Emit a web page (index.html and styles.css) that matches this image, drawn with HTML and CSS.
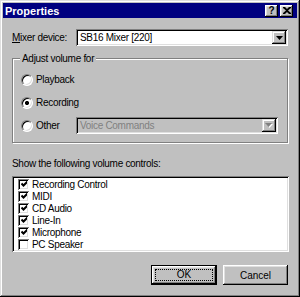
FILE: index.html
```html
<!DOCTYPE html>
<html lang="en">
<head>
  <meta charset="UTF-8">
  <title>Properties</title>
  <link rel="stylesheet" href="styles.css">
</head>
<body>
  <div class="window">
    <div class="titlebar">
      <span class="title">Properties</span>
      <div class="title-buttons">
        <span class="tbtn help">?</span>
        <span class="tbtn close">
          <svg width="8" height="7" viewBox="0 0 8 7"><path d="M0 0h2l2 2 2-2h2v1L5 3.5 8 6v1H6L4 5 2 7H0V6l3-2.5L0 1z" fill="#000"/></svg>
        </span>
      </div>
    </div>

    <div class="content">
      <div class="field-row">
        <label class="field-label"><u>M</u>ixer device:</label>
        <div class="combo">
          <span class="combo-text">SB16 Mixer [220]</span>
          <span class="drop"><svg width="7" height="4" viewBox="0 0 7 4"><path d="M0 0h7L3.5 4z" fill="#000"/></svg></span>
        </div>
      </div>

      <fieldset class="group">
        <legend>Adjust volume for</legend>
        <div class="radio-row">
          <span class="radio"></span>
          <span>Playback</span>
        </div>
        <div class="radio-row">
          <span class="radio checked"></span>
          <span>Recording</span>
        </div>
        <div class="radio-row">
          <span class="radio"></span>
          <span class="radio-label">Other</span>
          <div class="combo disabled">
            <span class="combo-text">Voice Commands</span>
            <span class="drop"><svg width="8" height="5" viewBox="0 0 8 5"><path d="M1 1h7L4.5 5z" fill="#fff"/><path d="M0 0h7L3.5 4z" fill="#808080"/></svg></span>
          </div>
        </div>
      </fieldset>

      <p class="list-label">Show the following volume controls:</p>
      <div class="listbox">
        <div class="item"><span class="check on"></span>Recording Control</div>
        <div class="item"><span class="check on"></span>MIDI</div>
        <div class="item"><span class="check on"></span>CD Audio</div>
        <div class="item"><span class="check on"></span>Line-In</div>
        <div class="item"><span class="check on"></span>Microphone</div>
        <div class="item"><span class="check"></span>PC Speaker</div>
      </div>

      <div class="buttons">
        <button class="btn default"><span class="focus">OK</span></button>
        <button class="btn">Cancel</button>
      </div>
    </div>
  </div>
</body>
</html>
```

FILE: styles.css
```css
html, body {
  margin: 0;
  width: 300px;
  height: 297px;
  overflow: hidden;
  background: #c0c0c0;
}

body {
  font-family: "Liberation Sans", Arial, sans-serif;
  font-size: 10px;
  letter-spacing: -0.3px;
  color: #000;
  white-space: nowrap;
}

.window {
  box-sizing: border-box;
  width: 300px;
  height: 297px;
  padding: 3px;
  background: #c0c0c0;
  box-shadow: inset -1px -1px #000, inset 1px 1px #dfdfdf,
              inset -2px -2px #808080, inset 2px 2px #fff;
}

/* title bar */
.titlebar {
  height: 15px;
  background: #000080;
  color: #fff;
  display: flex;
  align-items: center;
  justify-content: space-between;
  padding: 0 4px 0 2px;
}

.title {
  font-weight: bold;
  font-size: 11px;
  letter-spacing: 0;
}

.title-buttons {
  display: flex;
  gap: 2px;
}

.tbtn {
  box-sizing: border-box;
  width: 13px;
  height: 12px;
  background: #c0c0c0;
  display: flex;
  align-items: center;
  justify-content: center;
  box-shadow: inset -1px -1px #000, inset 1px 1px #fff,
              inset -2px -2px #808080, inset 2px 2px #dfdfdf;
}

.help {
  color: #000;
  font-weight: bold;
  font-size: 10px;
  letter-spacing: 0;
  line-height: 12px;
}

/* dialog body */
.content {
  padding: 11px 9px 0;
}

.field-row {
  display: flex;
  align-items: center;
  height: 17px;
}

.field-label {
  width: 64px;
}

.combo {
  flex: 1;
  box-sizing: border-box;
  height: 17px;
  background: #fff;
  display: flex;
  align-items: center;
  justify-content: space-between;
  padding: 2px 2px 2px 4px;
  box-shadow: inset 1px 1px #808080, inset -1px -1px #fff,
              inset 2px 2px #000, inset -2px -2px #dfdfdf;
}

.combo.disabled {
  background: #c0c0c0;
  color: #808080;
}

.drop {
  box-sizing: border-box;
  width: 14px;
  height: 13px;
  background: #c0c0c0;
  display: flex;
  align-items: center;
  justify-content: center;
  box-shadow: inset -1px -1px #000, inset 1px 1px #dfdfdf,
              inset -2px -2px #808080, inset 2px 2px #fff;
}

/* group box */
.group {
  margin: 6px 0 0;
  padding: 6px 8px 8px 8px;
  min-width: 0;
  border: 1px solid #808080;
  box-shadow: inset 1px 1px #fff, 1px 1px #fff;
  display: flex;
  flex-direction: column;
  gap: 6px;
}

.group legend {
  padding: 0 2px;
  margin-left: -1px;
  background: #c0c0c0;
  line-height: 13px;
}

.radio-row {
  display: flex;
  align-items: center;
  height: 17px;
}

.radio {
  width: 12px;
  height: 12px;
  margin-right: 3px;
  border-radius: 50%;
  background:
    radial-gradient(circle, #000 0 2px, transparent 2.2px),
    #fff;
  background-size: 0 0, auto;
  background-repeat: no-repeat;
  box-sizing: border-box;
  border: 1px solid;
  border-color: #808080 #fff #fff #808080;
  box-shadow: inset 1px 1px #000, inset -1px -1px #dfdfdf;
}

.radio.checked {
  background-size: auto, auto;
}

.radio-label {
  width: 40px;
}

.radio-row .combo {
  flex: none;
  width: 202px;
}

/* list */
.list-label {
  margin: 14px 0 6px;
  line-height: 13px;
}

.listbox {
  box-sizing: border-box;
  height: 76px;
  margin-right: -1px;
  background: #fff;
  padding: 2px 2px 0 6px;
  box-shadow: inset 1px 1px #808080, inset -1px -1px #fff,
              inset 2px 2px #000, inset -2px -2px #dfdfdf;
}

.item {
  display: flex;
  align-items: center;
  height: 12px;
}

.check {
  box-sizing: border-box;
  width: 11px;
  height: 11px;
  margin-right: 3px;
  background: #fff no-repeat center;
  box-shadow: inset 1px 1px #808080, inset -1px -1px #fff,
              inset 2px 2px #000, inset -2px -2px #dfdfdf;
}

.check.on {
  background-image: url("data:image/svg+xml,%3Csvg xmlns='http://www.w3.org/2000/svg' width='7' height='7'%3E%3Cpath d='M0.5 2.5l2 2 4-4' fill='none' stroke='%23000' stroke-width='2'/%3E%3C/svg%3E");
  background-position: 3px 2px;
}

/* buttons */
.buttons {
  display: flex;
  justify-content: flex-end;
  gap: 6px;
  margin-top: 13px;
}

.btn {
  box-sizing: border-box;
  width: 65px;
  height: 20px;
  padding: 0;
  border: none;
  background: #c0c0c0;
  font: inherit;
  color: #000;
  box-shadow: inset -1px -1px #000, inset 1px 1px #fff,
              inset -2px -2px #808080, inset 2px 2px #dfdfdf;
}

.btn.default {
  width: 66px;
  border: 1px solid #000;
  padding: 3px;
}

.focus {
  display: block;
  height: 100%;
  box-sizing: border-box;
  border: 1px dotted #000;
  line-height: 10px;
}
```
